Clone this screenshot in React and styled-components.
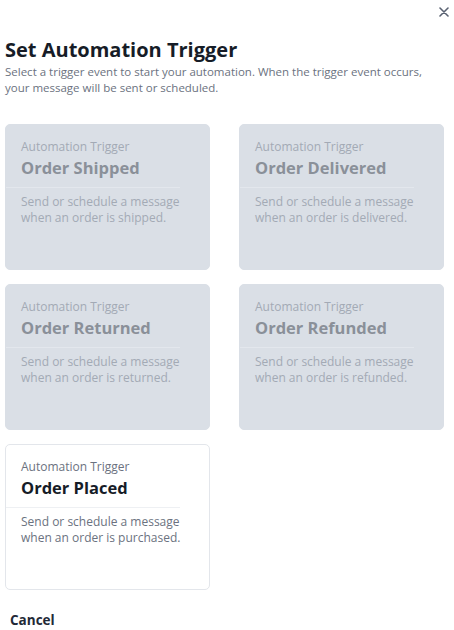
import React from 'react';
import styled, { createGlobalStyle } from 'styled-components';

const Global = createGlobalStyle`
  body {
    margin: 0;
    background: #ffffff;
    font-family: "Open Sans", Lato, sans-serif;
  }
`;

const Modal = styled.div`
  width: 454px;
  height: 630px;
  box-sizing: border-box;
  padding: 0 10px 0 5px;
  display: flex;
  flex-direction: column;
`;

const TopBar = styled.div`
  display: flex;
  justify-content: flex-end;
  height: 24px;
  padding-top: 2px;
  margin-right: -10px;
`;

const Close = styled.button`
  border: none;
  background: none;
  padding: 0;
  width: 20px;
  height: 20px;
  color: #5a6272;
  display: flex;
  align-items: center;
  justify-content: center;
  cursor: pointer;
`;

const Title = styled.h1`
  margin: 11px 0 0;
  font-size: 20px;
  line-height: 26px;
  font-weight: 700;
  color: #161c27;
`;

const Subtitle = styled.p`
  margin: 1px 0 0;
  max-width: 425px;
  font-size: 11.5px;
  line-height: 16px;
  color: #6b7280;
`;

const Grid = styled.div`
  margin-top: 28px;
  display: grid;
  grid-template-columns: 205px 205px;
  column-gap: 29px;
  row-gap: 14px;
`;

const Card = styled.div`
  height: 146px;
  box-sizing: border-box;
  border-radius: 5px;
  background: ${p => (p.disabled ? '#dadfe6' : '#ffffff')};
  border: 1px solid ${p => (p.disabled ? '#dadfe6' : '#e3e6eb')};
  padding-top: 14px;
  color: ${p => (p.disabled ? '#a3aab5' : '#6b7280')};
`;

const CardHead = styled.div`
  margin-right: 29px;
  padding: 0 0 7px 15px;
  border-bottom: 1px solid ${p => (p.disabled ? '#e3e7ed' : '#eef0f3')};
`;

const Eyebrow = styled.div`
  font-size: 12px;
  line-height: 16px;
`;

const CardTitle = styled.div`
  font-size: 16.5px;
  line-height: 25px;
  font-weight: 700;
  color: ${p => (p.disabled ? '#8a9099' : '#161c27')};
`;

const CardText = styled.p`
  margin: 6px 0 0;
  padding: 0 15px;
  font-size: 12px;
  line-height: 16px;
`;

const Footer = styled.div`
  margin-top: auto;
  padding: 0 0 2px 5px;
  height: 20px;
`;

const Cancel = styled.button`
  border: none;
  background: none;
  padding: 0;
  font-family: inherit;
  font-size: 13.5px;
  font-weight: 700;
  color: #1f2937;
  cursor: pointer;
`;

const triggers = [
  { name: 'Order Shipped', text: 'when an order is shipped.', disabled: true },
  { name: 'Order Delivered', text: 'when an order is delivered.', disabled: true },
  { name: 'Order Returned', text: 'when an order is returned.', disabled: true },
  { name: 'Order Refunded', text: 'when an order is refunded.', disabled: true },
  { name: 'Order Placed', text: 'when an order is purchased.', disabled: false },
];

export default function App() {
  return (
    <>
      <Global />
      <Modal>
        <TopBar>
          <Close aria-label="Close">
            <svg width="10" height="10" viewBox="0 0 10 10">
              <path d="M1 1L9 9M9 1L1 9" stroke="currentColor" strokeWidth="1.6" strokeLinecap="round" />
            </svg>
          </Close>
        </TopBar>
        <Title>Set Automation Trigger</Title>
        <Subtitle>
          Select a trigger event to start your automation. When the trigger event occurs,
          your message will be sent or scheduled.
        </Subtitle>
        <Grid>
          {triggers.map(t => (
            <Card key={t.name} disabled={t.disabled}>
              <CardHead disabled={t.disabled}>
                <Eyebrow>Automation Trigger</Eyebrow>
                <CardTitle disabled={t.disabled}>{t.name}</CardTitle>
              </CardHead>
              <CardText>
                Send or schedule a message
                <br />
                {t.text}
              </CardText>
            </Card>
          ))}
        </Grid>
        <Footer>
          <Cancel>Cancel</Cancel>
        </Footer>
      </Modal>
    </>
  );
}
